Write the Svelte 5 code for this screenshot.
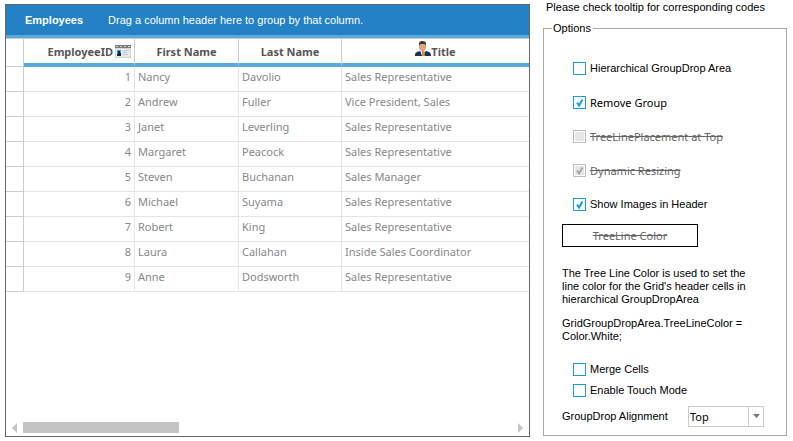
<script>
  const employees = [
    [1, 'Nancy', 'Davolio', 'Sales Representative'],
    [2, 'Andrew', 'Fuller', 'Vice President, Sales'],
    [3, 'Janet', 'Leverling', 'Sales Representative'],
    [4, 'Margaret', 'Peacock', 'Sales Representative'],
    [5, 'Steven', 'Buchanan', 'Sales Manager'],
    [6, 'Michael', 'Suyama', 'Sales Representative'],
    [7, 'Robert', 'King', 'Sales Representative'],
    [8, 'Laura', 'Callahan', 'Inside Sales Coordinator'],
    [9, 'Anne', 'Dodsworth', 'Sales Representative']
  ];

  let hierarchical = $state(false);
  let removeGroup = $state(true);
  let showImages = $state(true);
  let mergeCells = $state(false);
  let touchMode = $state(false);
  let alignment = $state('Top');
</script>

<main class="page">
  <section class="grid-panel">
    <header class="drop-area">
      <strong>Employees</strong>
      <span>Drag a column header here to group by that column.</span>
    </header>
    <table>
      <colgroup>
        <col class="c-row" /><col class="c-id" /><col class="c-first" /><col class="c-last" /><col />
      </colgroup>
      <thead>
        <tr>
          <td class="row-head"></td>
          <th class="right">
            <span class="head">EmployeeID
              {#if showImages}
                <svg width="16" height="14" viewBox="0 0 16 14" aria-hidden="true">
                  <rect x="0" y="1" width="16" height="12" fill="#d3d6d8" />
                  <rect x="0" y="0" width="16" height="3" fill="#77797b" />
                  <path d="M1 1h2v1H1zM5 1h2v1H5zM9 1h2v1H9zM13 1h2v1h-2z" fill="#d6d8d9" />
                  <rect x="1" y="4" width="14" height="8" fill="#e8eaeb" />
                  <rect x="2" y="5" width="4" height="6" fill="#3f9be0" />
                  <path d="M3 6h2v2h1v3H2V9h1z" fill="#10233c" />
                  <path d="M8 5.500h6M8 7.500h4M8 9.500h5" stroke="#c4c8ca" />
                </svg>
              {/if}
            </span>
          </th>
          <th>First Name</th>
          <th>Last Name</th>
          <th>
            <span class="head person">
              {#if showImages}
                <svg width="16" height="16" viewBox="0 0 16 16" aria-hidden="true">
                  <path d="M0 15c0-3 1-4 5-5l3 2 3-2c4 1 5 2 5 5z" fill="#14345f" />
                  <path d="M5 9h5l-1 6H7z" fill="#f3e9e2" />
                  <path d="M7 10h2l1 5H7z" fill="#e78a2d" />
                  <path d="M4 3c0-2 7-2 7 0v4c0 4-7 4-7 0z" fill="#dfa57f" />
                  <path d="M4 5V2c1-3 7-2 7 0v3l-1-2H5z" fill="#45372f" />
                </svg>
              {/if}Title</span>
          </th>
        </tr>
      </thead>
      <tbody>
        {#each employees as [id, first, last, title] (id)}
          <tr>
            <td class="row-head"></td>
            <td class="right">{id}</td>
            <td>{first}</td>
            <td>{last}</td>
            <td>{title}</td>
          </tr>
        {/each}
      </tbody>
    </table>
    <div class="scrollbar">
      <button aria-label="Scroll left"><svg width="5" height="10" viewBox="0 0 5 10"><path d="M5 0v10L0 5z" fill="#c4c4c4" /></svg></button>
      <div class="track"><div class="thumb"></div></div>
      <button aria-label="Scroll right"><svg width="5" height="10" viewBox="0 0 5 10"><path d="M0 0v10l5-5z" fill="#c4c4c4" /></svg></button>
    </div>
  </section>

  <aside>
    <p class="hint">Please check tooltip for corresponding codes</p>
    <fieldset>
      <legend>Options</legend>
      <div class="checks">
        <label><input type="checkbox" bind:checked={hierarchical} />Hierarchical GroupDrop Area</label>
        <label class="wide"><input type="checkbox" bind:checked={removeGroup} />Remove Group</label>
        <label class="off wide"><input type="checkbox" disabled /><s>TreeLinePlacement at Top</s></label>
        <label class="off wide"><input type="checkbox" checked disabled /><s>Dynamic Resizing</s></label>
        <label><input type="checkbox" bind:checked={showImages} />Show Images in Header</label>
      </div>
      <button class="color" disabled><s>TreeLine Color</s></button>
      <div class="note">
        <p>The Tree Line Color is used to set the line color for the Grid's header cells in hierarchical GroupDropArea</p>
        <p>GridGroupDropArea.TreeLineColor = Color.White;</p>
      </div>
      <div class="checks modes">
        <label><input type="checkbox" bind:checked={mergeCells} />Merge Cells</label>
        <label><input type="checkbox" bind:checked={touchMode} />Enable Touch Mode</label>
      </div>
      <div class="align">
        <label for="alignment">GroupDrop Alignment</label>
        <span class="combo">
          <select id="alignment" bind:value={alignment}>
            <option>Top</option>
            <option>Bottom</option>
          </select>
          <svg width="7" height="4" viewBox="0 0 7 4" aria-hidden="true"><path d="M0 0h7L3.5 4z" fill="#777" /></svg>
        </span>
      </div>
    </fieldset>
  </aside>
</main>

<style>
  :global(body) {
    margin: 0;
    background: #fff;
  }
  .page {
    box-sizing: border-box;
    min-height: 100vh;
    display: grid;
    grid-template-columns: minmax(0, 1fr) 244px;
    gap: 13px;
    padding: 4px 6px 4px 5px;
    font: 11px/13px "Liberation Sans", Arial, sans-serif;
    color: #000;
  }
  p {
    margin: 0;
  }
  .grid-panel {
    display: flex;
    flex-direction: column;
    border: 1px solid #666;
  }
  .drop-area {
    display: flex;
    align-items: center;
    gap: 25px;
    height: 30px;
    padding-left: 19px;
    background: #2381c4;
    border-bottom: 3px solid #5aa9dd;
    color: #fff;
  }
  table {
    width: 100%;
    table-layout: fixed;
    border-collapse: separate;
    border-spacing: 0;
    font: 11px/16px "Noto Sans", "Open Sans", sans-serif;
    color: #888;
  }
  .c-row { width: 18px; }
  .c-id { width: 111px; }
  .c-first { width: 104px; }
  .c-last { width: 103px; }
  th, td {
    box-sizing: border-box;
    height: 25px;
    padding: 0 3px 4px;
    border-right: 1px solid #e4e4e4;
    border-bottom: 1px solid #e4e4e4;
    text-align: left;
    white-space: nowrap;
  }
  th {
    height: 29px;
    padding: 2px 3px 0;
    border-top: 1px solid #ccc;
    border-right-color: #ccc;
    border-bottom: 4px solid #5aa9dd;
    color: #555;
    font-weight: 700;
    text-align: center;
  }
  .row-head {
    border-right-color: #ccc;
    border-bottom-color: #ccc;
  }
  thead .row-head {
    border-top: 1px solid #ccc;
  }
  th:last-child, td:last-child {
    border-right: 0;
  }
  .right {
    text-align: right;
  }
  .head {
    display: inline-flex;
    align-items: center;
    gap: 2px;
    vertical-align: top;
  }
  .person {
    gap: 0;
  }
  .person svg {
    margin-top: -6px;
  }
  svg {
    display: block;
  }
  .scrollbar {
    display: flex;
    align-items: center;
    gap: 6px;
    margin-top: auto;
    padding: 0 6px 3px;
  }
  .scrollbar button {
    padding: 0;
    border: 0;
    background: none;
  }
  .track {
    flex: 1;
  }
  .thumb {
    width: 32%;
    height: 11px;
    background: #c4c4c4;
  }
  aside {
    display: flex;
    flex-direction: column;
    margin-top: -3px;
    padding-bottom: 1px;
  }
  .hint {
    padding-left: 3px;
  }
  fieldset {
    flex: 1;
    box-sizing: border-box;
    min-width: 0;
    margin: 8px 0 0;
    padding: 0 22px 8px 18px;
    border: 1px solid #a8a8a8;
  }
  legend {
    margin-left: -10px;
    padding: 0 2px 0 1px;
  }
  .checks {
    display: flex;
    flex-direction: column;
    gap: 21px;
    padding: 27px 0 0 11px;
  }
  .checks label {
    display: flex;
    align-items: center;
    gap: 4px;
  }
  .wide {
    font-family: "Noto Sans", "Open Sans", sans-serif;
  }
  .off, .color {
    color: #666;
  }
  input {
    appearance: none;
    box-sizing: border-box;
    width: 13px;
    height: 13px;
    margin: 0;
    border: 1px solid #1a9bdc;
    background: #fff;
  }
  input:checked {
    background: url("data:image/svg+xml,%3Csvg xmlns='http://www.w3.org/2000/svg' viewBox='0 0 11 11'%3E%3Cpath d='M3 5.5l2 3L8.500 2.500' fill='none' stroke='%231a9bdc' stroke-width='2'/%3E%3C/svg%3E");
  }
  input:disabled {
    border-color: #bcbcbc;
    background: #e6e6e6;
    box-shadow: inset 0 0 0 1px #fff;
  }
  input:disabled:checked {
    background: #e6e6e6 url("data:image/svg+xml,%3Csvg xmlns='http://www.w3.org/2000/svg' viewBox='0 0 11 11'%3E%3Cpath d='M3 5.500l2 3L8.500 2.500' fill='none' stroke='%23aaa' stroke-width='2'/%3E%3C/svg%3E");
  }
  .color {
    display: block;
    width: 136px;
    height: 23px;
    margin-top: 13px;
    padding: 0;
    border: 1px solid #000;
    background: #fff;
    font: 11px/13px "Noto Sans", "Open Sans", sans-serif;
  }
  .note {
    display: flex;
    flex-direction: column;
    gap: 11px;
    padding-top: 20px;
  }
  .modes {
    gap: 8px;
    padding-top: 20px;
  }
  .align {
    display: flex;
    align-items: center;
    justify-content: space-between;
    padding-top: 9px;
  }
  .combo {
    position: relative;
  }
  select {
    appearance: none;
    display: block;
    box-sizing: border-box;
    width: 76px;
    height: 21px;
    padding: 0 1px;
    border: 1px solid #ccc;
    border-radius: 0;
    background: linear-gradient(#ccc, #ccc) right 14px top / 1px 100% no-repeat #fff;
    color: #000;
    font: 11px/16px "Noto Sans", "Open Sans", sans-serif;
  }
  .combo svg {
    position: absolute;
    right: 4px;
    top: 8px;
  }
</style>
